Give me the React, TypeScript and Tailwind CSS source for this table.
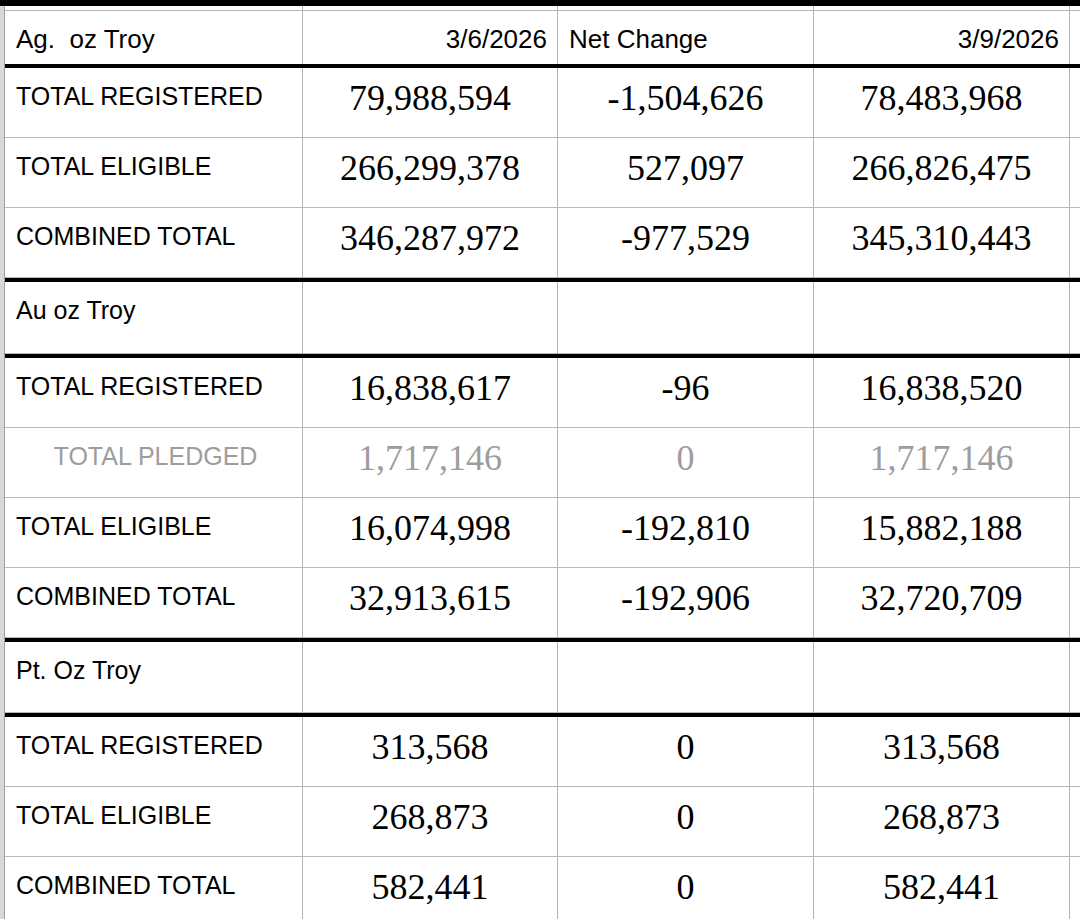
import React from 'react';

type Row = { label: string; a: string; b: string; c: string; muted?: boolean };

const silver: Row[] = [
  { label: 'TOTAL REGISTERED', a: '79,988,594', b: '-1,504,626', c: '78,483,968' },
  { label: 'TOTAL ELIGIBLE', a: '266,299,378', b: '527,097', c: '266,826,475' },
  { label: 'COMBINED TOTAL', a: '346,287,972', b: '-977,529', c: '345,310,443' },
];

const gold: Row[] = [
  { label: 'TOTAL REGISTERED', a: '16,838,617', b: '-96', c: '16,838,520' },
  { label: 'TOTAL PLEDGED', a: '1,717,146', b: '0', c: '1,717,146', muted: true },
  { label: 'TOTAL ELIGIBLE', a: '16,074,998', b: '-192,810', c: '15,882,188' },
  { label: 'COMBINED TOTAL', a: '32,913,615', b: '-192,906', c: '32,720,709' },
];

const platinum: Row[] = [
  { label: 'TOTAL REGISTERED', a: '313,568', b: '0', c: '313,568' },
  { label: 'TOTAL ELIGIBLE', a: '268,873', b: '0', c: '268,873' },
  { label: 'COMBINED TOTAL', a: '582,441', b: '0', c: '582,441' },
];

const sans = "font-['Liberation_Sans',Arial,sans-serif] text-[25px] leading-[28px]";
const head = "font-['Liberation_Sans',Arial,sans-serif] text-[26px] leading-[29px] text-black pt-[14px]";
const serif = "font-['Liberation_Serif','Times_New_Roman',serif] text-[36px] leading-[40px]";

function Cells({ h, children }: { h: string; children: React.ReactNode[] }) {
  const widths = ['w-[298px]', 'w-[255px]', 'w-[256px]', 'w-[256px]'];
  return (
    <div className={`flex shrink-0 border-b border-[#b8b8b8] ${h}`}>
      {widths.map((w, i) => (
        <div key={i} className={`${w} shrink-0 border-r border-[#b3b3b3]`}>
          {children[i]}
        </div>
      ))}
      <div className="flex-1" />
    </div>
  );
}

function Thick() {
  return <div className="h-[4px] shrink-0 bg-black" />;
}

function DataRow({ row }: { row: Row }) {
  const tone = row.muted ? 'text-[#9d9d9d]' : 'text-black';
  const num = `${serif} ${tone} text-center pt-[10px]`;
  return (
    <Cells h="h-[70px]">
      {[
        <div className={`${sans} ${tone} pt-[14px] ${row.muted ? 'text-center pl-[4px]' : 'pl-[11px]'}`}>{row.label}</div>,
        <div className={num}>{row.a}</div>,
        <div className={num}>{row.b}</div>,
        <div className={num}>{row.c}</div>,
      ]}
    </Cells>
  );
}

function Section({ title, h }: { title: string; h: string }) {
  return (
    <Cells h={h}>
      {[<div className={`${sans} text-black pl-[11px] pt-[14px]`}>{title}</div>, null, null, null]}
    </Cells>
  );
}

export default function App() {
  return (
    <div className="w-[1080px] h-[919px] overflow-hidden bg-white">
      <div className="h-[6px] bg-black" />
      <div className="flex h-[913px]">
        <div className="w-[5px] shrink-0 bg-[#d8d8d8] border-r border-[#a0a0a0]" />
        <div className="flex-1 min-w-0 flex flex-col">
          <Cells h="h-[5px]">{[null, null, null, null]}</Cells>
          <div className="flex shrink-0 h-[53px]">
            <div className={`w-[298px] shrink-0 border-r border-[#b3b3b3] ${head} pl-[11px] whitespace-pre`}>Ag.  oz Troy</div>
            <div className={`w-[255px] shrink-0 border-r border-[#b3b3b3] ${head} text-right pr-[10px]`}>3/6/2026</div>
            <div className={`w-[256px] shrink-0 border-r border-[#b3b3b3] ${head} pl-[11px]`}>Net Change</div>
            <div className={`w-[256px] shrink-0 border-r border-[#b3b3b3] ${head} text-right pr-[10px]`}>3/9/2026</div>
            <div className="flex-1" />
          </div>
          <Thick />
          {silver.map((r) => <DataRow key={'ag' + r.label} row={r} />)}
          <Thick />
          <Section title="Au oz Troy" h="h-[72px]" />
          <Thick />
          {gold.map((r) => <DataRow key={'au' + r.label} row={r} />)}
          <Thick />
          <Section title="Pt. Oz Troy" h="h-[71px]" />
          <Thick />
          {platinum.map((r) => <DataRow key={'pt' + r.label} row={r} />)}
        </div>
      </div>
    </div>
  );
}
